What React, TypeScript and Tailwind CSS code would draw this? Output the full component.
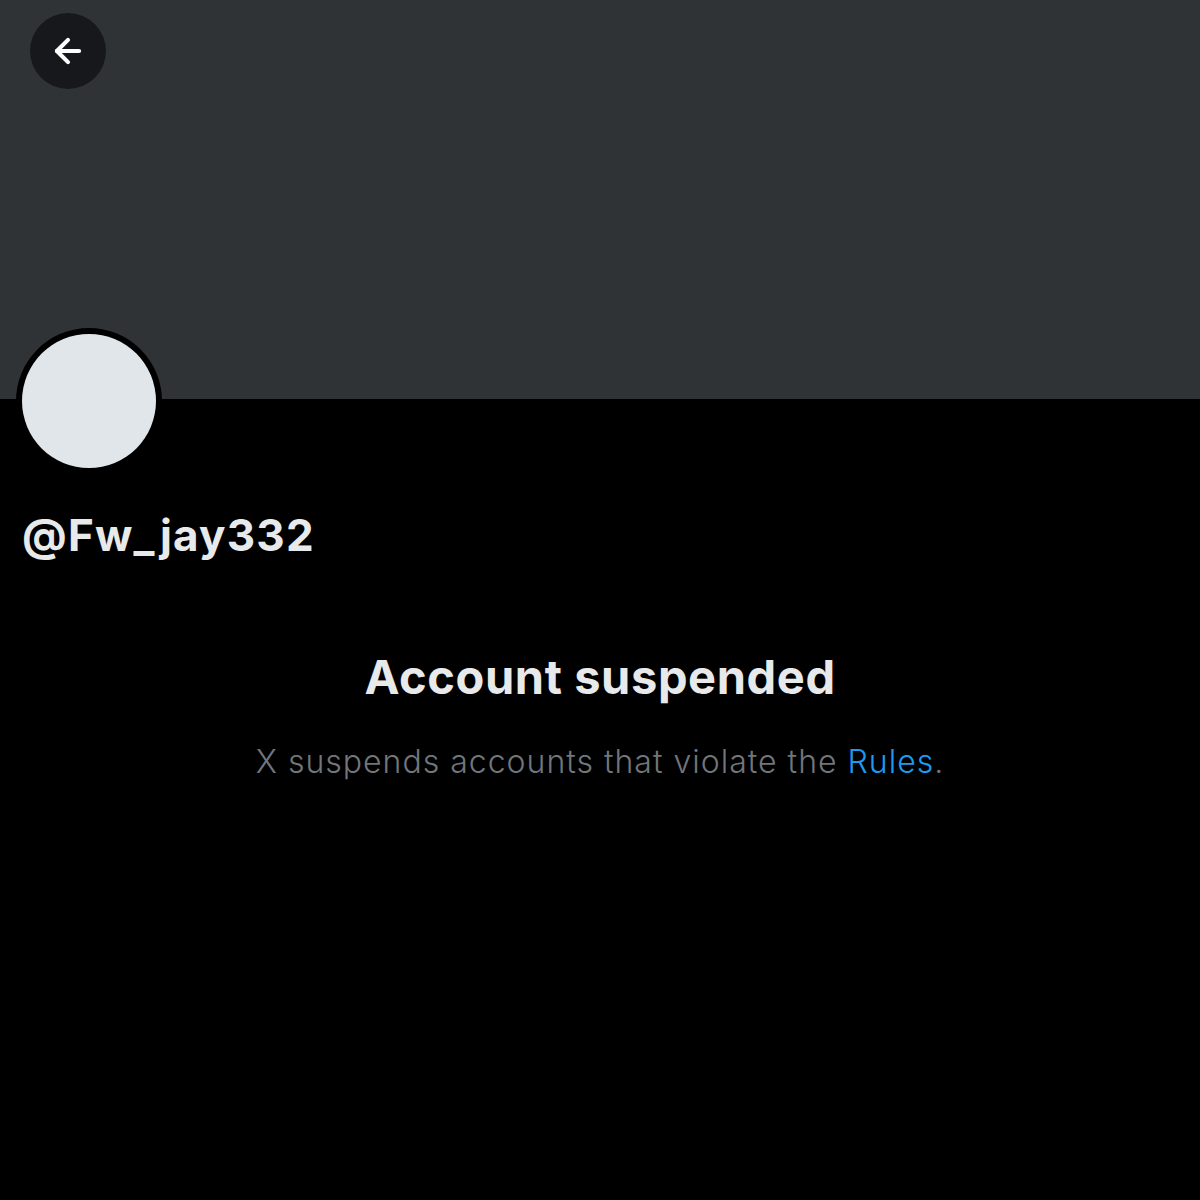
import { ArrowLeft } from "lucide-react";

const SuspendedProfile = () => {
  return (
    <div
      className="w-[1200px] h-[1200px] bg-black flex flex-col overflow-hidden"
      style={{ fontFamily: "Inter, 'Noto Sans', sans-serif" }}
    >
      {/* banner */}
      <div className="h-[399px] bg-[#303336] shrink-0 pt-[13px] pl-[30px]">
        <button className="w-[76px] h-[76px] rounded-full bg-[#16181b] flex items-center justify-center">
          <ArrowLeft className="w-[38px] h-[38px] text-white" strokeWidth={2.6} />
        </button>
      </div>

      <div className="relative px-[22px]">
        <div className="absolute left-[16px] -top-[71px] w-[146px] h-[146px] rounded-full bg-black p-[6px]">
          <div className="w-full h-full rounded-full bg-[#e1e6ea]" />
        </div>
        <div className="pt-[106px] text-[44px] font-bold tracking-[1.2px] text-[#e7e9ea] leading-[60px]">
          @Fw_jay332
        </div>
      </div>

      <div className="flex flex-col items-center mt-[82px]">
        <h1 className="text-[47px] font-bold tracking-[0.6px] text-[#e7e9ea] leading-[60px]">
          Account suspended
        </h1>
        <p className="mt-[32px] text-[32px] font-light tracking-[1px] text-[#71767b] leading-[46px]">
          X suspends accounts that violate the{" "}
          <span className="text-[#1d9bf0]">Rules</span>.
        </p>
      </div>
    </div>
  );
};

export default function App() {
  return <SuspendedProfile />;
}
